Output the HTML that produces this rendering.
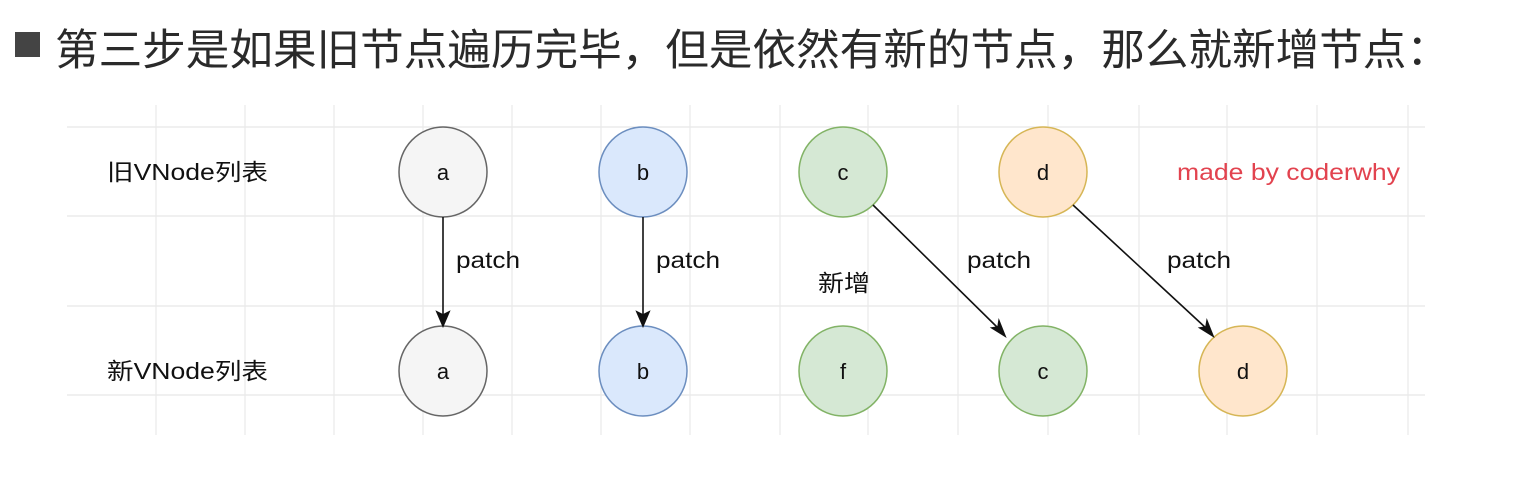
<!DOCTYPE html>
<html><head><meta charset="utf-8"><style>
html,body{margin:0;padding:0;background:#fff;width:1518px;height:490px;overflow:hidden}
.b{position:absolute;left:15px;top:32px;width:25px;height:25px;background:#444}
svg{position:absolute;left:0;top:0}
</style></head><body>
<div class="b"></div>
<svg width="1518" height="490" font-family="Liberation Sans, Noto Sans CJK SC, sans-serif">
<text x="55" y="65" font-size="43" fill="#2a2a2a" textLength="1395" lengthAdjust="spacingAndGlyphs">第三步是如果旧节点遍历完毕，但是依然有新的节点，那么就新增节点：</text>
<g stroke="#e8e8e8" stroke-width="1.2">
<line x1="67" y1="127" x2="1425" y2="127"/><line x1="67" y1="216" x2="1425" y2="216"/><line x1="67" y1="306" x2="1425" y2="306"/><line x1="67" y1="395" x2="1425" y2="395"/>
<line x1="156" y1="105" x2="156" y2="435"/><line x1="245" y1="105" x2="245" y2="435"/><line x1="334" y1="105" x2="334" y2="435"/><line x1="423" y1="105" x2="423" y2="435"/><line x1="512" y1="105" x2="512" y2="435"/><line x1="601" y1="105" x2="601" y2="435"/><line x1="690" y1="105" x2="690" y2="435"/><line x1="780" y1="105" x2="780" y2="435"/><line x1="868" y1="105" x2="868" y2="435"/><line x1="958" y1="105" x2="958" y2="435"/><line x1="1048" y1="105" x2="1048" y2="435"/><line x1="1139" y1="105" x2="1139" y2="435"/><line x1="1227" y1="105" x2="1227" y2="435"/><line x1="1317" y1="105" x2="1317" y2="435"/><line x1="1408" y1="105" x2="1408" y2="435"/>
</g>
<g stroke-width="1.5">
<ellipse cx="443" cy="172" rx="44" ry="45" fill="#f5f5f5" stroke="#666"/>
<ellipse cx="643" cy="172" rx="44" ry="45" fill="#dae8fc" stroke="#6c8ebf"/>
<ellipse cx="843" cy="172" rx="44" ry="45" fill="#d5e8d4" stroke="#82b366"/>
<ellipse cx="1043" cy="172" rx="44" ry="45" fill="#ffe6cc" stroke="#d6b656"/>
<ellipse cx="443" cy="371" rx="44" ry="45" fill="#f5f5f5" stroke="#666"/>
<ellipse cx="643" cy="371" rx="44" ry="45" fill="#dae8fc" stroke="#6c8ebf"/>
<ellipse cx="843" cy="371" rx="44" ry="45" fill="#d5e8d4" stroke="#82b366"/>
<ellipse cx="1043" cy="371" rx="44" ry="45" fill="#d5e8d4" stroke="#82b366"/>
<ellipse cx="1243" cy="371" rx="44" ry="45" fill="#ffe6cc" stroke="#d6b656"/>
</g>
<g font-size="22" fill="#111" text-anchor="middle">
<text x="443" y="180">a</text><text x="643" y="180">b</text><text x="843" y="180">c</text><text x="1043" y="180">d</text>
<text x="443" y="379">a</text><text x="643" y="379">b</text><text x="843" y="379">f</text><text x="1043" y="379">c</text><text x="1243" y="379">d</text>
</g>
<g stroke="#111" stroke-width="1.6" fill="#111">
<line x1="443" y1="217" x2="443" y2="316"/><path d="M437 312 L443 326 L449 312 L443 315Z"/>
<line x1="643" y1="217" x2="643" y2="316"/><path d="M637 312 L643 326 L649 312 L643 315Z"/>
<line x1="873" y1="205" x2="999" y2="329"/><path d="M992 328 L1005 336 L999 321 L998 327Z"/>
<line x1="1073" y1="205" x2="1207" y2="329"/><path d="M1200 328 L1213 336 L1207 321 L1206 327Z"/>
</g>
<g font-size="23" fill="#111">
<text x="107" y="180" textLength="161" lengthAdjust="spacingAndGlyphs">旧VNode列表</text><text x="107" y="379" textLength="161" lengthAdjust="spacingAndGlyphs">新VNode列表</text>
<text x="456" y="268" textLength="64" lengthAdjust="spacingAndGlyphs">patch</text><text x="656" y="268" textLength="64" lengthAdjust="spacingAndGlyphs">patch</text><text x="967" y="268" textLength="64" lengthAdjust="spacingAndGlyphs">patch</text><text x="1167" y="268" textLength="64" lengthAdjust="spacingAndGlyphs">patch</text>
<text x="818" y="291" textLength="52" lengthAdjust="spacingAndGlyphs">新增</text>
<text x="1177" y="180" fill="#e2434f" textLength="223" lengthAdjust="spacingAndGlyphs">made by coderwhy</text>
</g>
</svg>
</body></html>
